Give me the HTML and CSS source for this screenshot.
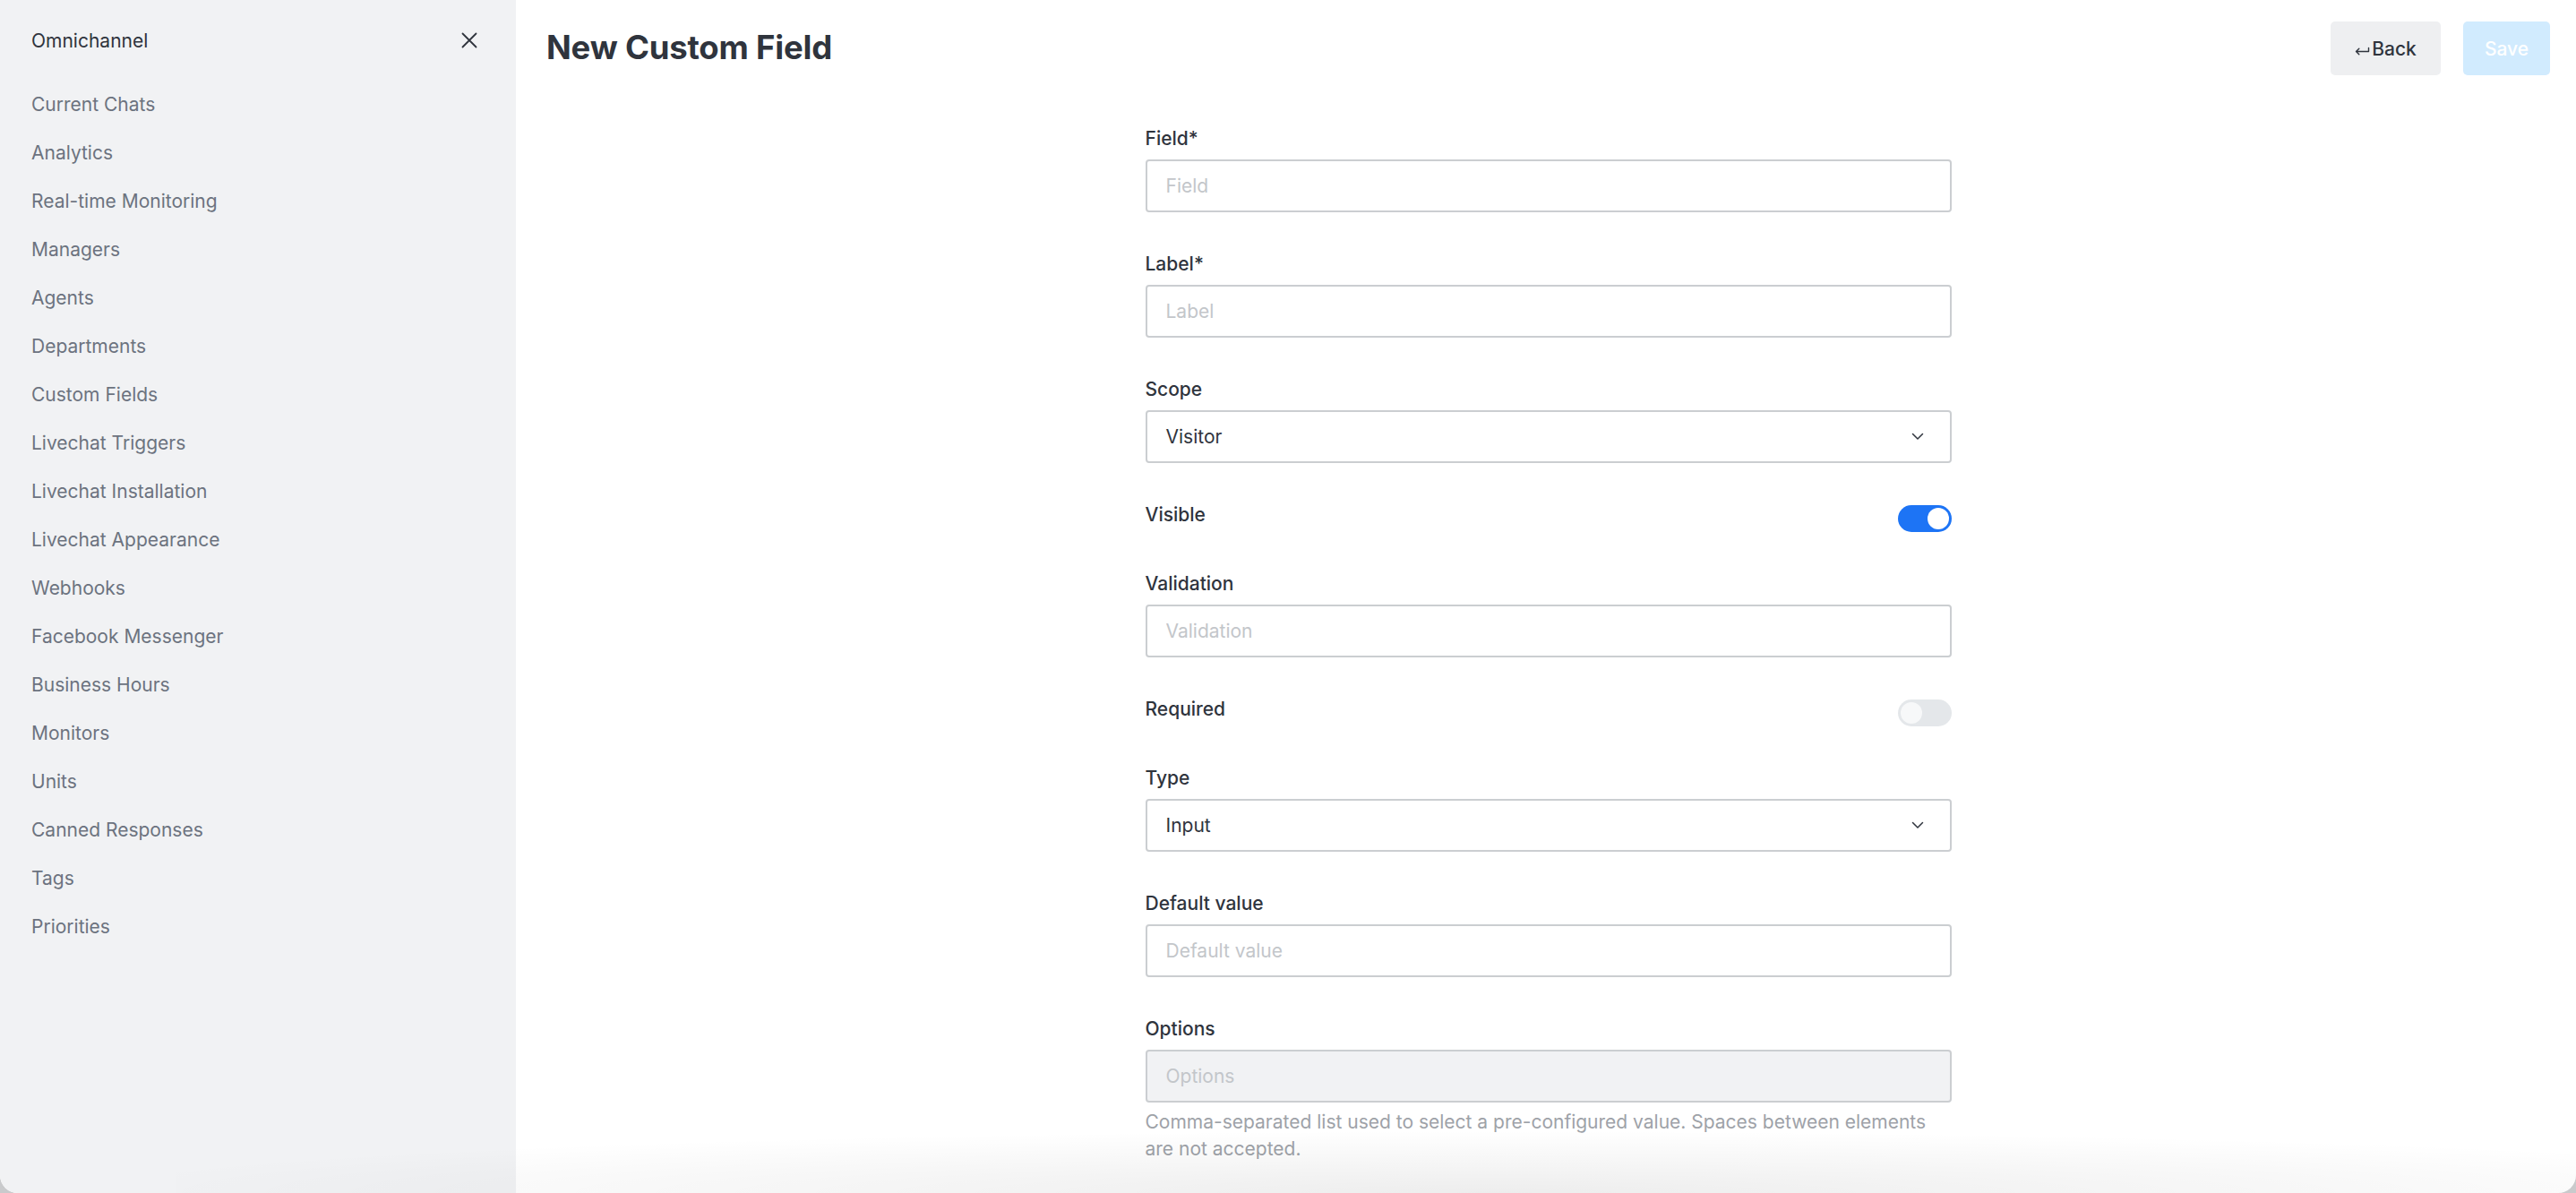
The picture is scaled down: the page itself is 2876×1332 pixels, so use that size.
FILE: index.html
```html
<!DOCTYPE html>
<html lang="en">
<head>
<meta charset="utf-8">
<title>New Custom Field</title>
<link rel="stylesheet" href="styles.css">
</head>
<body>
<div class="app">
  <aside class="sidebar">
    <div class="sidebar-head">
      <span class="sidebar-title">Omnichannel</span>
      <svg class="close" width="20" height="20" viewBox="0 0 20 20"><path d="M2.5 2.5 L17.5 17.5 M17.5 2.5 L2.5 17.5" stroke="#2f343d" stroke-width="1.8" fill="none" stroke-linecap="round"/></svg>
    </div>
    <nav class="nav">
      <a class="nav-item">Current Chats</a>
      <a class="nav-item">Analytics</a>
      <a class="nav-item">Real-time Monitoring</a>
      <a class="nav-item">Managers</a>
      <a class="nav-item">Agents</a>
      <a class="nav-item">Departments</a>
      <a class="nav-item">Custom Fields</a>
      <a class="nav-item">Livechat Triggers</a>
      <a class="nav-item">Livechat Installation</a>
      <a class="nav-item">Livechat Appearance</a>
      <a class="nav-item">Webhooks</a>
      <a class="nav-item">Facebook Messenger</a>
      <a class="nav-item">Business Hours</a>
      <a class="nav-item">Monitors</a>
      <a class="nav-item">Units</a>
      <a class="nav-item">Canned Responses</a>
      <a class="nav-item">Tags</a>
      <a class="nav-item">Priorities</a>
    </nav>
  </aside>
  <main class="main">
    <header class="page-head">
      <h1 class="page-title">New Custom Field</h1>
      <div class="actions">
        <button class="btn btn-back"><svg class="back-ico" width="18" height="14" viewBox="0 0 18 14"><path d="M1.5 9.5 L4.8 6.2 M1.5 9.5 L4.8 12.8 M1.5 9.5 H15.5 V5.5" stroke="#2f343d" stroke-width="1.4" fill="none" stroke-linecap="round" stroke-linejoin="round"/></svg>Back</button>
        <button class="btn btn-save">Save</button>
      </div>
    </header>
    <form class="form">
      <div class="group">
        <label class="label">Field*</label>
        <input class="input" placeholder="Field">
      </div>
      <div class="group">
        <label class="label">Label*</label>
        <input class="input" placeholder="Label">
      </div>
      <div class="group">
        <label class="label">Scope</label>
        <div class="select"><span>Visitor</span><svg width="14" height="9" viewBox="0 0 14 9"><path d="M1.5 1.5 L7 7 L12.5 1.5" stroke="#2f343d" stroke-width="1.5" fill="none" stroke-linecap="round" stroke-linejoin="round"/></svg></div>
      </div>
      <div class="toggle-row">
        <span class="label">Visible</span>
        <span class="toggle on"><span class="knob"></span></span>
      </div>
      <div class="group">
        <label class="label">Validation</label>
        <input class="input" placeholder="Validation">
      </div>
      <div class="toggle-row">
        <span class="label">Required</span>
        <span class="toggle off"><span class="knob"></span></span>
      </div>
      <div class="group">
        <label class="label">Type</label>
        <div class="select"><span>Input</span><svg width="14" height="9" viewBox="0 0 14 9"><path d="M1.5 1.5 L7 7 L12.5 1.5" stroke="#2f343d" stroke-width="1.5" fill="none" stroke-linecap="round" stroke-linejoin="round"/></svg></div>
      </div>
      <div class="group">
        <label class="label">Default value</label>
        <input class="input" placeholder="Default value">
      </div>
      <div class="group">
        <label class="label">Options</label>
        <input class="input disabled" placeholder="Options" disabled>
        <p class="hint">Comma-separated list used to select a pre-configured value. Spaces between elements are not accepted.</p>
      </div>
    </form>
    <div class="bottom-fade"></div>
  </main>
</div>
</body>
</html>
```

FILE: styles.css
```css
* { box-sizing: border-box; }

html, body {
  margin: 0;
  padding: 0;
  background: #c9cacc;
  font-family: Inter, "Noto Sans", "Liberation Sans", sans-serif;
  color: #2f343d;
}

.app {
  display: flex;
  width: 2876px;
  height: 1332px;
  background: #ffffff;
  border-radius: 0 0 20px 20px;
  overflow: hidden;
}

.sidebar {
  width: 576px;
  flex: 0 0 576px;
  background: #f1f2f4;
}

.sidebar-head {
  height: 90px;
  display: flex;
  align-items: center;
  justify-content: space-between;
  padding: 0 42px 0 35px;
}

.sidebar-title {
  font-size: 21px;
  color: #2f343d;
}

.close { display: block; }

.nav {
  display: flex;
  flex-direction: column;
}

.nav-item {
  display: block;
  height: 54px;
  line-height: 54px;
  padding-left: 35px;
  font-size: 21px;
  color: #6c737f;
}

.main {
  flex: 1;
  position: relative;
  padding: 24px 29px 0 34px;
}

.page-head {
  height: 60px;
  display: flex;
  align-items: center;
  justify-content: space-between;
}

.page-title {
  margin: 0 0 2px;
  font-size: 36.5px;
  font-weight: 700;
  color: #2f343d;
  letter-spacing: -0.2px;
}

.actions {
  display: flex;
  gap: 25px;
}

.btn {
  height: 60px;
  border: none;
  border-radius: 5px;
  font-family: inherit;
  font-size: 21px;
  font-weight: 500;
  display: flex;
  align-items: center;
  justify-content: center;
}

.btn-back {
  width: 123px;
  background: #eeeff1;
  color: #2f343d;
}

.back-ico { margin-right: 1px; margin-top: 1px; }

.btn-save {
  width: 97px;
  background: #d1ebfe;
  color: #ffffff;
}

.form {
  width: 900px;
  margin: 56px auto 0;
  display: flex;
  flex-direction: column;
  gap: 43px;
}

.group {
  display: flex;
  flex-direction: column;
}

.label {
  font-size: 21px;
  line-height: 30px;
  font-weight: 500;
  color: #2f343d;
}

.group .label { margin-bottom: 8px; }

.input, .select {
  height: 59px;
  width: 100%;
  border: 2px solid #cbced1;
  border-radius: 4px;
  padding: 0 21px;
  font-family: inherit;
  font-size: 21px;
  color: #2f343d;
  background: #ffffff;
  outline: none;
}

.input::placeholder { color: #c3c6ca; }

.input.disabled {
  background: #f1f2f4;
}

.select {
  display: flex;
  align-items: center;
  justify-content: space-between;
  padding-right: 29px;
}

.toggle-row {
  height: 34px;
  display: flex;
  align-items: flex-start;
  justify-content: space-between;
}

.toggle {
  width: 60px;
  height: 30px;
  margin-top: 4px;
  border-radius: 15px;
  display: flex;
  align-items: center;
  padding: 0 3px;
}

.toggle.on {
  background: #1d74f5;
  justify-content: flex-end;
}

.toggle.off {
  background: #e4e7ea;
  justify-content: flex-start;
}

.knob {
  width: 24px;
  height: 24px;
  border-radius: 50%;
  background: #ffffff;
}

.toggle.off .knob { background: #f7f8f9; }

.hint {
  margin: 7px 0 0;
  font-size: 21px;
  line-height: 30px;
  color: #9ea2a8;
}

.bottom-fade {
  position: absolute;
  left: -380px;
  right: 0;
  bottom: 0;
  height: 70px;
  background: radial-gradient(ellipse 60% 100% at 55% 100%, rgba(0,0,0,0.07), rgba(0,0,0,0) 100%);
  pointer-events: none;
}
```
